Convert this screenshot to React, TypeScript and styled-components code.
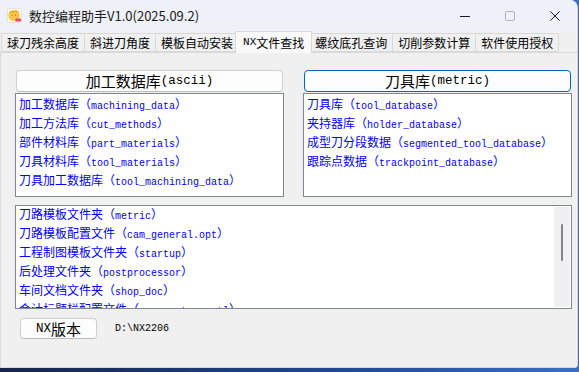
import React from 'react';
import styled, { createGlobalStyle } from 'styled-components';

const Global = createGlobalStyle`
  html, body { margin: 0; padding: 0; }
  body {
    width: 579px;
    height: 372px;
    overflow: hidden;
    background: linear-gradient(90deg, #16254a 0%, #1f4a94 60%, #3a6fc4 100%);
    font-family: "Noto Sans CJK SC", sans-serif;
  }
`;

const Window = styled.div`
  width: 577px;
  height: 368px;
  background: #f0f0f0;
  border-top-right-radius: 8px;
  border-bottom-right-radius: 4px;
  border-right: 1px solid #d4d4d4;
  display: flex;
  flex-direction: column;
  overflow: hidden;
`;

const TitleBar = styled.div`
  height: 31px;
  flex: none;
  display: flex;
  align-items: center;
  background: #eef1f8;
  padding-left: 7px;
`;

const TitleText = styled.span`
  margin-left: 7px;
  font-size: 13px;
  color: #1a1a1a;
  line-height: 31px;
  flex: 1;
  white-space: nowrap;
`;

const Controls = styled.div`
  display: flex;
  height: 31px;
`;

const ControlButton = styled.div`
  width: 45px;
  height: 31px;
  display: flex;
  align-items: center;
  justify-content: center;
`;

const TabStrip = styled.div`
  height: 21px;
  flex: none;
  display: flex;
  align-items: flex-end;
  padding-left: 1px;
  background: #f0f0f0;
  position: relative;
  z-index: 1;
`;

const Tab = styled.div<{ $active?: boolean }>`
  height: ${p => (p.$active ? '22px' : '19px')};
  margin: ${p => (p.$active ? '0 -3px -1px -3px' : '0 -1px 0 0')};
  padding: ${p => (p.$active ? '0 7px' : '0 5px')};
  border: 1px solid #d9d9d9;
  border-bottom: ${p => (p.$active ? 'none' : '1px solid #d9d9d9')};
  background: ${p => (p.$active ? '#f9f9f9' : '#f0f0f0')};
  position: relative;
  z-index: ${p => (p.$active ? 2 : 0)};
  display: flex;
  align-items: center;
  box-sizing: border-box;
  font-size: 12px;
  color: #000;
  white-space: nowrap;
  line-height: 17px;
`;

const Panel = styled.div`
  flex: 1;
  border: 1px solid #d9d9d9;
  border-right: none;
  background: #f0f0f0;
  padding: 17px 0 0 14px;
  display: grid;
  grid-template-columns: 269px 269px;
  grid-auto-rows: min-content;
  column-gap: 19px;
  align-content: start;
`;

const Column = styled.div`
  display: flex;
  flex-direction: column;
`;

const PushButton = styled.div<{ $focused?: boolean }>`
  height: 22px;
  box-sizing: border-box;
  margin: 0 1px;
  border: 1px solid ${p => (p.$focused ? '#0067c0' : '#d0d0d0')};
  border-bottom-color: ${p => (p.$focused ? '#0067c0' : '#bcbcbc')};
  border-radius: 4px;
  background: #fdfdfd;
  display: flex;
  align-items: center;
  justify-content: center;
  white-space: nowrap;
  color: #000;
  line-height: 20px;
`;

const Cjk = styled.span<{ $size: number }>`
  font-family: "Noto Sans CJK SC", sans-serif;
  font-size: ${p => p.$size}px;
`;

const Mono = styled.span<{ $size: number }>`
  font-family: "Liberation Mono", monospace;
  font-size: ${p => p.$size}px;
`;

const ListBox = styled.div<{ $wide?: boolean }>`
  height: 104px;
  box-sizing: border-box;
  margin-top: ${p => (p.$wide ? '8px' : '1px')};
  grid-column: ${p => (p.$wide ? '1 / span 2' : 'auto')};
  border: 1px solid #82878f;
  background: #fff;
  display: flex;
  overflow: hidden;
`;

const Rows = styled.div<{ $scrolled?: boolean }>`
  flex: 1;
  overflow: hidden;
  margin-top: ${p => (p.$scrolled ? '-2px' : '0')};
`;

const Row = styled.div`
  height: 19px;
  line-height: 17px;
  padding-left: 3px;
  color: #0000ff;
  white-space: nowrap;
  overflow: hidden;
`;

const ScrollTrack = styled.div`
  width: 16px;
  margin: 1px 1px 1px 0;
  background: #f0f0f0;
  display: flex;
  flex-direction: column;
  padding-top: 17px;
  box-sizing: border-box;
`;

const ScrollThumb = styled.div`
  width: 2px;
  height: 37px;
  margin-left: 7px;
  border-radius: 1px;
  background: #858585;
`;

const Footer = styled.div`
  grid-column: 1 / span 2;
  margin-top: 9px;
  padding-left: 5px;
  display: flex;
  align-items: center;
  gap: 18px;
`;

const SmallButton = styled(PushButton)`
  width: 77px;
  height: 21px;
  margin: 0;
`;

const PathText = styled.span`
  font-family: "Liberation Mono", monospace;
  font-size: 10px;
  color: #000;
`;

type Entry = [string, string];

const leftItems: Entry[] = [
  ['加工数据库', 'machining_data'],
  ['加工方法库', 'cut_methods'],
  ['部件材料库', 'part_materials'],
  ['刀具材料库', 'tool_materials'],
  ['刀具加工数据库', 'tool_machining_data'],
];

const rightItems: Entry[] = [
  ['刀具库', 'tool_database'],
  ['夹持器库', 'holder_database'],
  ['成型刀分段数据', 'segmented_tool_database'],
  ['跟踪点数据', 'trackpoint_database'],
];

const bottomItems: Entry[] = [
  ['刀路模板文件夹', 'metric'],
  ['刀路模板配置文件', 'cam_general.opt'],
  ['工程制图模板文件夹', 'startup'],
  ['后处理文件夹', 'postprocessor'],
  ['车间文档文件夹', 'shop_doc'],
  ['会计标题栏配置文件', 'ugs_customer_tl'],
];

const tabs = ['球刀残余高度', '斜进刀角度', '模板自动安装', 'NX文件查找', '螺纹底孔查询', '切削参数计算', '软件使用授权'];

const Item: React.FC<{ entry: Entry }> = ({ entry }) => (
  <Row>
    <Cjk $size={12}>{entry[0]}（</Cjk>
    <Mono $size={10}>{entry[1]}</Mono>
    <Cjk $size={12}>）</Cjk>
  </Row>
);

const AppIcon = () => (
  <svg width="15" height="15" viewBox="0 0 15 15">
    <rect x="0.5" y="0.5" width="14" height="14" rx="1" fill="#fbf7ee" stroke="#e8e2d6" />
    <circle cx="7" cy="7.5" r="5.6" fill="#f6c64a" />
    <path d="M2.5 5 L4 3.2 L5 4.6 L6.5 2.5 L7.6 4.3 L9.2 2.6 L10 4.6 L11.6 3.6" stroke="#e9a21c" strokeWidth="1" fill="none" />
    <circle cx="5.2" cy="7.4" r="0.7" fill="#c98a10" />
    <circle cx="8.6" cy="7.4" r="0.7" fill="#c98a10" />
    <rect x="8.5" y="10.5" width="5.5" height="3" fill="#e8476a" />
  </svg>
);

const Minimize = () => (
  <svg width="10" height="10" viewBox="0 0 10 10">
    <line x1="0" y1="5.5" x2="10" y2="5.5" stroke="#1a1a1a" strokeWidth="1" />
  </svg>
);

const Maximize = () => (
  <svg width="10" height="10" viewBox="0 0 10 10">
    <rect x="0.5" y="0.5" width="9" height="9" rx="1.5" fill="none" stroke="#b3b3b3" strokeWidth="1" />
  </svg>
);

const Close = () => (
  <svg width="10" height="10" viewBox="0 0 10 10">
    <path d="M0.5 0.5 L9.5 9.5 M9.5 0.5 L0.5 9.5" stroke="#1a1a1a" strokeWidth="1" />
  </svg>
);

export default function App() {
  return (
    <>
      <Global />
      <Window>
        <TitleBar>
          <AppIcon />
          <TitleText>数控编程助手V1.0(2025.09.2)</TitleText>
          <Controls>
            <ControlButton><Minimize /></ControlButton>
            <ControlButton><Maximize /></ControlButton>
            <ControlButton><Close /></ControlButton>
          </Controls>
        </TitleBar>
        <TabStrip>
          {tabs.map(t =>
            t.startsWith('NX') ? (
              <Tab key={t} $active>
                <Mono $size={11}>NX</Mono>
                <Cjk $size={12}>{t.slice(2)}</Cjk>
              </Tab>
            ) : (
              <Tab key={t}>{t}</Tab>
            )
          )}
        </TabStrip>
        <Panel>
          <Column>
            <PushButton>
              <Cjk $size={15}>加工数据库</Cjk>
              <Mono $size={12.5}>(ascii)</Mono>
            </PushButton>
            <ListBox>
              <Rows>
                {leftItems.map(e => <Item key={e[1]} entry={e} />)}
              </Rows>
            </ListBox>
          </Column>
          <Column>
            <PushButton $focused>
              <Cjk $size={15}>刀具库</Cjk>
              <Mono $size={12.5}>(metric)</Mono>
            </PushButton>
            <ListBox>
              <Rows>
                {rightItems.map(e => <Item key={e[1]} entry={e} />)}
              </Rows>
            </ListBox>
          </Column>
          <ListBox $wide>
            <Rows $scrolled>
              {bottomItems.map(e => <Item key={e[1]} entry={e} />)}
            </Rows>
            <ScrollTrack>
              <ScrollThumb />
            </ScrollTrack>
          </ListBox>
          <Footer>
            <SmallButton>
              <Mono $size={12.5}>NX</Mono>
              <Cjk $size={15}>版本</Cjk>
            </SmallButton>
            <PathText>{'D:\\NX2206'}</PathText>
          </Footer>
        </Panel>
      </Window>
    </>
  );
}
